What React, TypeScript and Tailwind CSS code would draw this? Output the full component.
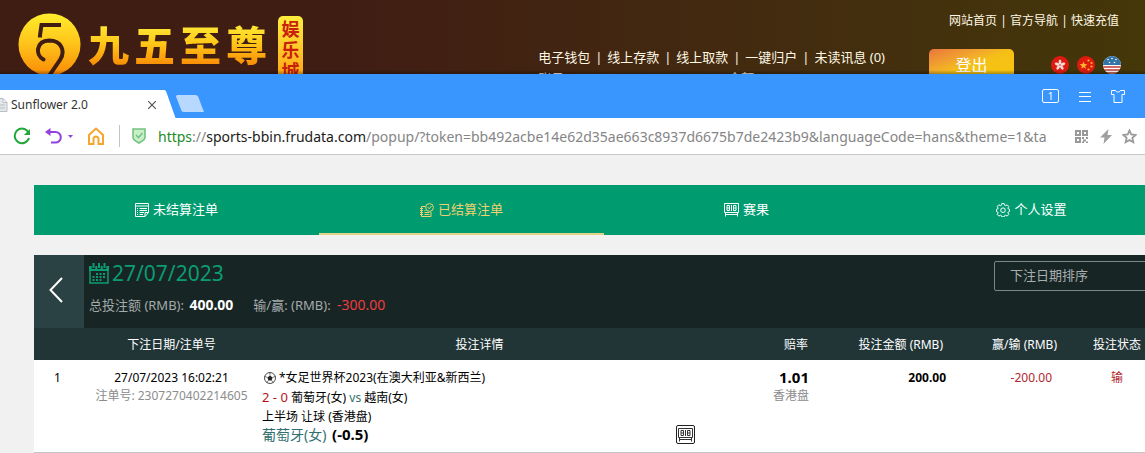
import type { ReactNode } from 'react'

const CJK = "font-['Noto_Sans','Noto_Sans_CJK_SC',sans-serif]"

const ACCOUNT_LINKS = ['电子钱包', '线上存款', '线上取款', '一键归户', '未读讯息 (0)']
const TOP_LINKS = ['网站首页', '官方导航', '快速充值']

const SheetIcon = () => (
  <svg className="size-[14px]" viewBox="0 0 14 14" fill="none" stroke="currentColor" aria-hidden="true">
    <path d="M.5.5h13v9l-3.500 4H.5zM.5 3h13M13.500 9.500H10v4M2 5.500h1M4.500 5.500H12M2 7.500h1M4.500 7.500H12M2 9.500h1M4.500 9.500H9M2 11.500h1M4.500 11.500H8" />
  </svg>
)

const SettledIcon = () => (
  <svg className="size-[14px]" viewBox="0 0 14 14" fill="none" stroke="currentColor" aria-hidden="true">
    <path d="M5.500 3.500h-4v10h9.500V9M0 5.500h3M0 7.500h3M0 9.500h3M0 11.500h3M4.500 7.500h1M4.500 9.500h5M4.500 11.500h5" />
    <circle cx="9.500" cy="4.500" r="3.900" />
    <path d="M7.500 4 9.300 5.800 11.500 3" />
  </svg>
)

const ScoreIcon = ({ className }: { className: string }) => (
  <svg className={className} viewBox="0 0 15 14" fill="none" stroke="currentColor" aria-hidden="true">
    <path d="M.5.5h14v9H.5zM1.500 9.500v4M13.500 9.500v4M1.500 11.500h12M7.500 2v6" />
    <path d="M3 2.500h2.500v5H3zM3 5h2.500M9.500 2.500H12v5H9.500zM9.500 5H12" />
  </svg>
)

const GearIcon = () => (
  <svg className="size-[14px]" viewBox="0 0 14 14" fill="none" stroke="currentColor" aria-hidden="true">
    <path d="M5.800.6h2.400l.4 1.700 1 .4 1.500-.9 1.700 1.700-.9 1.500.4 1 1.200.3v2.200l-1.200.4-.4 1 .9 1.500-1.700 1.700-1.500-.9-1 .4-.4 1.300H5.800l-.4-1.300-1-.4-1.500.9-1.700-1.700.9-1.500-.4-1L.5 8.500V6.300L1.700 6l.4-1-.9-1.500 1.700-1.700 1.500.9 1-.4z" />
    <circle cx="7" cy="7.200" r="2.300" />
  </svg>
)

const TABS: { label: string; icon: ReactNode; active?: boolean }[] = [
  { label: '未结算注单', icon: <SheetIcon /> },
  { label: '已结算注单', icon: <SettledIcon />, active: true },
  { label: '赛果', icon: <ScoreIcon className="h-[14px] w-[15px]" /> },
  { label: '个人设置', icon: <GearIcon /> },
]

const Logo = () => (
  <div className="flex items-start pl-[18px]">
    <svg className="mt-[13px] size-[63px]" viewBox="0 0 63 63" fill="none" role="img" aria-label="logo">
      <defs>
        <linearGradient id="coin" x1="0" y1="0" x2="0" y2="1">
          <stop offset="0" stopColor="#ffee2c" />
          <stop offset="0.500" stopColor="#ffc21a" />
          <stop offset="1" stopColor="#f98a06" />
        </linearGradient>
      </defs>
      <circle cx="31.500" cy="31.500" r="31" fill="url(#coin)" />
      <g stroke="#401d13" strokeWidth="4">
        <path d="M43 12H23.500L21.800 23.500" />
        <path d="M20 23.500h4" strokeWidth="2" />
        <path d="M25.500 46.500C17 42 18 28 31 27.500c13 0 16.500 11 11 19.500L31 63" strokeLinecap="round" />
      </g>
    </svg>
    <h1 className="ml-[7px] mt-5 flex gap-[5px] font-['Noto_Sans_CJK_SC',sans-serif] text-[41px] leading-[46px] font-black">
      {['九', '五', '至', '尊'].map((char) => (
        <span key={char} className="bg-gradient-to-b from-[#fff23a] via-[#ffc818] to-[#f88a05] bg-clip-text text-transparent">
          {char}
        </span>
      ))}
    </h1>
    <p className="ml-[11px] mt-4 w-[25px] rounded-[5px] bg-gradient-to-b from-[#ffee3c] to-[#ffa010] px-[3px] pt-[2px] text-center font-['Noto_Sans_CJK_SC',sans-serif] text-[18px] leading-[21px] font-bold text-[#c8200c]">
      娱乐城
    </p>
  </div>
)

const HongKongFlag = () => (
  <svg className="size-[18px]" viewBox="0 0 18 18" aria-hidden="true">
    <circle cx="9" cy="9" r="9" fill="#de1a10" />
    <g fill="#f3dcd8">
      <ellipse cx="9" cy="6" rx="1.400" ry="2.500" />
      <ellipse cx="9" cy="6" rx="1.400" ry="2.500" transform="rotate(72 9 9)" />
      <ellipse cx="9" cy="6" rx="1.400" ry="2.500" transform="rotate(144 9 9)" />
      <ellipse cx="9" cy="6" rx="1.400" ry="2.500" transform="rotate(216 9 9)" />
      <ellipse cx="9" cy="6" rx="1.400" ry="2.500" transform="rotate(288 9 9)" />
    </g>
  </svg>
)

const ChinaFlag = () => (
  <svg className="size-[18px]" viewBox="0 0 18 18" aria-hidden="true">
    <circle cx="9" cy="9" r="9" fill="#de1a10" />
    <path d="m6.500 5.500 1 2.600 2.900.1-2.300 1.800.8 2.700-2.400-1.500-2.400 1.500.8-2.700-2.300-1.800 2.900-.1z" fill="#ffb52c" />
    <g fill="#ffb52c">
      <circle cx="11.500" cy="4.500" r="1.100" />
      <circle cx="14.500" cy="7" r="1.100" />
      <circle cx="14.500" cy="10.500" r="1.100" />
      <circle cx="11.500" cy="13.500" r="1.100" />
    </g>
  </svg>
)

const UsaFlag = () => (
  <svg className="size-[18px]" viewBox="0 0 18 18" aria-hidden="true">
    <clipPath id="usa">
      <circle cx="9" cy="9" r="9" />
    </clipPath>
    <g clipPath="url(#usa)">
      <path d="M0 0h18v18H0z" fill="#fff" />
      <path d="M0 0h18v9H0z" fill="#3274a8" />
      <path d="M0 11h18M0 14h18M0 17h18" stroke="#c4362e" strokeWidth="1.500" />
      <g fill="#fff">
        <circle cx="5" cy="3.500" r=".8" />
        <circle cx="9" cy="2.500" r=".8" />
        <circle cx="13" cy="3.500" r=".8" />
        <circle cx="6.500" cy="6.500" r=".8" />
        <circle cx="11.500" cy="6.500" r=".8" />
      </g>
    </g>
  </svg>
)

const SiteHeader = () => (
  <header className="relative flex h-[74px] justify-between overflow-hidden bg-gradient-to-r from-[#401d13] from-30% to-[#443708] text-[#fff8e4]">
    <Logo />
    <div className="flex">
      <div className="mr-11 mt-12 text-[13px] leading-[18px]">
        <nav className="flex" aria-label="Account">
          {ACCOUNT_LINKS.map((link, index) => (
            <span key={link} className="whitespace-nowrap">
              {index > 0 && <span className="inline-block w-[17px] text-center">|</span>}
              <a href="#">{link}</a>
            </span>
          ))}
        </nav>
        <div className="mt-[3px] flex">
          <span className="w-[190px]">账号</span>
          <span>余额</span>
        </div>
      </div>
      <div className="pr-6">
        <nav className="mt-[13px] flex justify-end pr-[2px] text-[12px] leading-4" aria-label="Site">
          {TOP_LINKS.map((link, index) => (
            <span key={link} className="whitespace-nowrap">
              {index > 0 && <span className="inline-block w-[13px] text-center">|</span>}
              <a href="#">{link}</a>
            </span>
          ))}
        </nav>
        <div className="mt-5 flex items-start">
          <button className="h-8 w-[85px] rounded-[5px] bg-gradient-to-br from-[#e8743c] via-[#f5c016] via-50% to-[#f6c60e] text-[16px] text-white">
            登出
          </button>
          <div className="ml-[37px] mt-[7px] flex gap-2">
            <a href="#" aria-label="Hong Kong"><HongKongFlag /></a>
            <a href="#" aria-label="China"><ChinaFlag /></a>
            <a href="#" aria-label="United States"><UsaFlag /></a>
          </div>
        </div>
      </div>
    </div>
    <div className="absolute inset-x-0 bottom-0 h-1 bg-gradient-to-t from-black/30 to-transparent" />
  </header>
)

const TabStrip = () => (
  <div className="flex h-11 items-end justify-between bg-[#3896fe]">
    <div className="flex items-end">
      <div className="flex h-7 w-[164px] items-center bg-white pt-[2px] text-[12px] text-[#333]">
        <svg className="h-[14px] w-2" viewBox="0 0 8 14" fill="#e4e8ec" stroke="#b8bec4" aria-hidden="true">
          <path d="M-2 .5h5l4 4v9h-9zM3 .5v4h4M-1 7h6M-1 10h6" />
        </svg>
        <span className="ml-[3px] flex-1">Sunflower 2.0</span>
        <button className="mr-2" aria-label="Close tab">
          <svg className="size-2" viewBox="0 0 8 8" stroke="#555" strokeWidth="1.200" aria-hidden="true">
            <path d="m0 0 8 8M8 0 0 8" />
          </svg>
        </button>
      </div>
      <svg className="h-7 w-3" viewBox="0 0 12 28" fill="#fff" aria-hidden="true">
        <path d="M0 0c1.500.2 2 1 2.500 2.500L11.500 28H0z" />
      </svg>
      <button className="mb-[6px]" aria-label="New tab">
        <svg className="h-[17px] w-[28px]" viewBox="0 0 28 17" fill="#b7d8ff" aria-hidden="true">
          <path d="M0 1.500Q0 0 1.500 0h18q2 0 2.600 1.500L28 17H8Q6 17 5.400 15.500z" />
        </svg>
      </button>
    </div>
    <div className="mb-[15px] mr-5 flex items-center gap-5 text-white">
      <button className="h-[14px] w-[17px] rounded-[2px] border border-white text-[10px] leading-3">1</button>
      <button aria-label="Menu">
        <svg className="h-[11px] w-3" viewBox="0 0 12 11" stroke="currentColor" aria-hidden="true">
          <path d="M0 1.500h12M0 5.500h12M0 10.500h12" />
        </svg>
      </button>
      <button aria-label="Theme">
        <svg className="h-[13px] w-[14px]" viewBox="0 0 14 13" fill="none" stroke="currentColor" aria-hidden="true">
          <path d="M4.500.5c.5 2 4.500 2 5 0h4v4h-2.500v8h-8v-8H.5v-4z" />
        </svg>
      </button>
    </div>
  </div>
)

const AddressBar = () => (
  <div className="flex h-[37px] items-center border-b border-[#c8c8c8] bg-white pl-[13px] pr-2">
    <button aria-label="Reload">
      <svg className="size-[18px]" viewBox="0 0 18 18" fill="none" stroke="#22a83a" strokeWidth="2" aria-hidden="true">
        <path d="M15.500 5.500A7.300 7.300 0 1 0 16 11" />
        <path d="M17 2v6h-6z" fill="#22a83a" stroke="none" />
      </svg>
    </button>
    <button className="ml-[14px] flex items-center gap-[6px]" aria-label="Back">
      <svg className="h-4 w-[17px]" viewBox="0 0 17 16" fill="none" stroke="#9440e0" strokeWidth="2" aria-hidden="true">
        <path d="M2 4h8.500a5.300 5.300 0 0 1 0 10.600H6" />
        <path d="M5.500 0v8L0 4z" fill="#9440e0" stroke="none" />
      </svg>
      <svg className="h-[3px] w-[5px]" viewBox="0 0 5 3" fill="#9440e0" aria-hidden="true">
        <path d="M0 0h5L2.500 3z" />
      </svg>
    </button>
    <button className="ml-[15px]" aria-label="Home">
      <svg className="h-[18px] w-4" viewBox="0 0 16 18" fill="none" stroke="#f6a62c" strokeWidth="2" aria-hidden="true">
        <path d="M1 17V8l7-6.500L15 8v9h-4.500v-5a2.500 2.500 0 0 0-5 0v5z" />
      </svg>
    </button>
    <div className="ml-[15px] h-[22px] w-px bg-[#c4c4c4]" />
    <svg className="ml-3 h-4 w-[14px] shrink-0" viewBox="0 0 14 16" fill="#c9efc6" stroke="#74c283" strokeWidth="1.600" aria-hidden="true">
      <path d="M1 1h12v8.500c0 2.500-3.500 4-6 5.500-2.500-1.500-6-3-6-5.500z" />
      <path d="m4 7 2.500 2.500L10.500 5" fill="none" />
    </svg>
    <a href="#" className="ml-3 min-w-0 flex-1 overflow-hidden whitespace-nowrap text-[14px] text-[#858585]">
      <span className="text-[#1b8a24]">https</span>://<span className="text-[#1a1a1a]">sports-bbin.frudata.com</span>
      /popup/?token=bb492acbe14e62d35ae663c8937d6675b7de2423b9&amp;languageCode=hans&amp;theme=1&amp;ta
    </a>
    <button className="ml-[7px]" aria-label="QR code">
      <svg className="size-[13px]" viewBox="0 0 13 13" fill="none" stroke="#999" strokeWidth="2" aria-hidden="true">
        <path d="M1 1h4v4H1zM8 1h4v4H8zM1 8h4v4H1z" />
        <path d="M7 8h2M11 8h2M8 10.500h3M7 12.500h2M11 12.500h2" />
      </svg>
    </button>
    <button className="ml-3" aria-label="Speed mode">
      <svg className="h-[15px] w-3" viewBox="0 0 12 15" fill="#a0a0a0" aria-hidden="true">
        <path d="M8.500 0 0 8.500h4.500L3.500 15 12 6H7.500z" />
      </svg>
    </button>
    <button className="ml-[10px]" aria-label="Bookmark">
      <svg className="size-[15px]" viewBox="0 0 15 15" fill="none" stroke="#999" strokeWidth="1.800" aria-hidden="true">
        <path d="m7.500 1.500 1.800 4 4.300.5-3.200 2.900.9 4.300-3.800-2.200-3.800 2.200.9-4.300L1.400 6l4.300-.5z" />
      </svg>
    </button>
  </div>
)

const BetTabs = () => (
  <nav className="grid grid-cols-4 bg-[#009c70] text-[13px] text-white" aria-label="Bets">
    {TABS.map(({ label, icon, active }) => (
      <a
        key={label}
        href="#"
        aria-current={active ? 'page' : undefined}
        className={
          active
            ? 'flex h-[50px] items-center justify-center gap-1 border-b-2 border-[#e2d38a] pt-[2px] text-[#f0d070]'
            : 'flex h-[50px] items-center justify-center gap-1 border-b-2 border-transparent pt-[2px]'
        }
      >
        {icon}
        {label}
      </a>
    ))}
  </nav>
)

const CalendarIcon = () => (
  <svg className="h-[21px] w-5" viewBox="0 0 20 21" fill="none" stroke="currentColor" aria-hidden="true">
    <path d="M1 4h18v16H1z" strokeWidth="1.500" />
    <path d="M0 3h20v5H0z" fill="currentColor" stroke="none" />
    <path d="M4.500 2v4M10 2v4M15.500 2v4" stroke="#182525" strokeWidth="3.500" />
    <path d="M4.500 0v5M10 0v5M15.500 0v5" strokeWidth="2" />
    <path d="M7 11h10M3.500 14h13.500M3.500 17h10" strokeWidth="2" strokeDasharray="2 1.500" />
  </svg>
)

const DaySummary = () => (
  <div className="flex h-[73px] bg-[#182525]">
    <button className="flex w-[50px] items-center justify-center bg-[#2a4244] pb-1 pr-[6px]" aria-label="Previous">
      <svg className="h-[26px] w-[14px]" viewBox="0 0 14 26" fill="none" stroke="#fff" strokeWidth="2" aria-hidden="true">
        <path d="M13 1 1.500 13 13 25" />
      </svg>
    </button>
    <div className="flex-1 pl-[5px] pt-[6px]">
      <h2 className="flex items-center gap-[3px] text-[21px] leading-6 text-[#0b9c73]">
        <CalendarIcon />
        27/07/2023
      </h2>
      <p className="mt-[10px] flex gap-5 text-[13px] leading-5 text-[#a4aaaa]">
        <span>
          总投注额 (RMB): <b className="ml-[2px] text-[14px] text-white">400.00</b>
        </span>
        <span>
          输/赢: (RMB): <span className="ml-[3px] text-[14px] text-[#ee3c40]">-300.00</span>
        </span>
      </p>
    </div>
    <select
      aria-label="排序"
      className="mt-[6px] h-[30px] w-[180px] appearance-none rounded-[2px] border border-[#7c8787] bg-transparent px-[15px] text-[13px] text-[#a8aeae]"
    >
      <option>下注日期排序</option>
    </select>
  </div>
)

const BetTable = () => (
  <table className="w-full table-fixed text-[12px] leading-[18px]">
    <colgroup>
      <col className="w-[47px]" />
      <col className="w-[181px]" />
      <col />
      <col className="w-[118px]" />
      <col className="w-[135px]" />
      <col className="w-[110px]" />
      <col className="w-[114px]" />
    </colgroup>
    <thead className="bg-[#213537] text-white">
      <tr className="h-8 [&>th]:pt-[2px] [&>th]:font-normal">
        <th />
        <th>下注日期/注单号</th>
        <th>投注详情</th>
        <th className="pr-[7px] text-right">赔率</th>
        <th className="pr-[7px] text-right">投注金额 (RMB)</th>
        <th className="pr-[3px] text-right">赢/输 (RMB)</th>
        <th>投注状态</th>
      </tr>
    </thead>
    <tbody className="bg-white text-black">
      <tr className="border-b border-[#c4c4c4] align-top [&>td]:pt-[9px]">
        <td className="text-center">1</td>
        <td className="text-center">
          <p>27/07/2023 16:02:21</p>
          <p className="text-[#8c8c8c]">注单号: 2307270402214605</p>
        </td>
        <td>
          <div className="flex h-[83px] items-end justify-between pb-2 pr-[2px]">
            <div className="self-start whitespace-nowrap">
              <p className="flex items-center gap-[3px]">
                <svg className="ml-[2px] size-3" viewBox="0 0 12 12" fill="none" stroke="#222" aria-hidden="true">
                  <circle cx="6" cy="6" r="5.500" strokeWidth=".8" />
                  <path d="m6 3.500 2.600 1.900-1 3H4.400l-1-3z" fill="#222" stroke="none" />
                  <path d="M6 3.500v-3M8.600 5.400l2.800-1M7.600 8.400l1.700 2.400M4.400 8.400l-1.700 2.400M3.400 5.400l-2.800-1" strokeWidth=".6" />
                </svg>
                *女足世界杯2023(在澳大利亚&amp;新西兰)
              </p>
              <p className="leading-5">
                <span className="text-[13px] text-[#b5121b]">2 - 0</span> 葡萄牙(女) <span className="text-[#2f7070]">vs</span> 越南(女)
              </p>
              <p>上半场 让球 (香港盘)</p>
              <p className="text-[14px] leading-4 text-[#2f7070]">
                葡萄牙(女) <b className="ml-[2px] text-[15px] text-black">(-0.5)</b>
              </p>
            </div>
            <button className="flex size-[19px] shrink-0 items-center justify-center rounded-[2px] border border-[#222] text-[#333]" aria-label="赛果">
              <ScoreIcon className="h-[14px] w-[15px]" />
            </button>
          </div>
        </td>
        <td className="pr-[6px] text-right">
          <p className="pb-[2px] text-[15px] leading-4 font-bold">1.01</p>
          <p className="text-[#8c8c8c]">香港盘</p>
        </td>
        <td className="pr-1 text-right font-bold">200.00</td>
        <td className="pr-2 text-right text-[#b0282e]">-200.00</td>
        <td className="text-center text-[#b0282e]">输</td>
      </tr>
    </tbody>
  </table>
)

export default function App() {
  return (
    <div className={`${CJK} overflow-hidden bg-[#f1f1f1]`}>
      <SiteHeader />
      <TabStrip />
      <AddressBar />
      {/* the popup is wider than the window, its right edge is cut off */}
      <main className="-mr-[29px] ml-[34px] pt-[30px]">
        <BetTabs />
        <section className="mt-5">
          <DaySummary />
          <BetTable />
        </section>
      </main>
    </div>
  )
}
